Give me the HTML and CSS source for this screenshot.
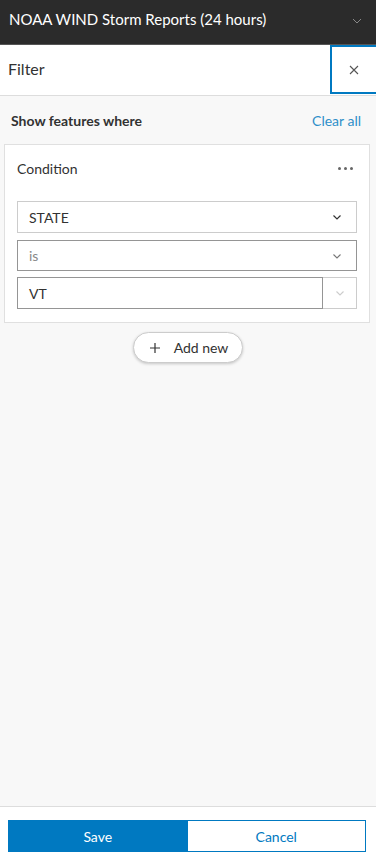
FILE: index.html
```html
<!DOCTYPE html>
<html lang="en">
<head>
    <meta charset="UTF-8">
    <meta name="viewport" content="width=device-width, initial-scale=1.0">
    <title>Filter</title>
    <link rel="stylesheet" href="styles.css">
</head>
<body>
    <div class="panel">
        <div class="layer-bar">
            <span class="layer-title">NOAA WIND Storm Reports (24 hours)</span>
            <svg class="chev light" width="12" height="12" viewBox="0 0 12 12"><path d="M2 4l4 4 4-4" fill="none" stroke="#888" stroke-width="1"/></svg>
        </div>
        <div class="filter-bar">
            <span class="filter-title">Filter</span>
            <button class="close-btn">
                <svg width="10" height="10" viewBox="0 0 10 10"><path d="M1 1l8 8M9 1l-8 8" stroke="#555" stroke-width="1.1"/></svg>
            </button>
        </div>
        <div class="content">
            <div class="where-row">
                <span class="where-label">Show features where</span>
                <a class="clear-all">Clear all</a>
            </div>
            <div class="card">
                <div class="card-head">
                    <span>Condition</span>
                    <span class="dots"><i></i><i></i><i></i></span>
                </div>
                <div class="select">
                    <span>STATE</span>
                    <svg width="12" height="12" viewBox="0 0 12 12"><path d="M2.5 4.5l3.5 3.5 3.5-3.5" fill="none" stroke="#333" stroke-width="1.2"/></svg>
                </div>
                <div class="select dark">
                    <span class="muted">is</span>
                    <svg width="12" height="12" viewBox="0 0 12 12"><path d="M2.5 4.5l3.5 3.5 3.5-3.5" fill="none" stroke="#777" stroke-width="1.1"/></svg>
                </div>
                <div class="combo">
                    <div class="combo-input">VT</div>
                    <div class="combo-btn">
                        <svg width="12" height="12" viewBox="0 0 12 12"><path d="M2.5 4.5l3.5 3.5 3.5-3.5" fill="none" stroke="#ccc" stroke-width="1.1"/></svg>
                    </div>
                </div>
            </div>
            <div class="add-wrap">
                <button class="add-btn">
                    <svg width="12" height="12" viewBox="0 0 12 12"><path d="M6 1v10M1 6h10" stroke="#333" stroke-width="1.2"/></svg>
                    <span>Add new</span>
                </button>
            </div>
        </div>
        <div class="footer">
            <button class="btn save">Save</button>
            <button class="btn cancel">Cancel</button>
        </div>
    </div>
</body>
</html>
```

FILE: styles.css
```css
body {
    margin: 0;
    font-family: Lato, "Open Sans", sans-serif;
    color: #323232;
}
.panel {
    display: flex;
    flex-direction: column;
    height: 859px;
    background: #f8f8f8;
}
.layer-bar {
    height: 45px;
    background: #2b2b2b;
    display: flex;
    align-items: center;
    justify-content: space-between;
    padding: 0 13px 0 9px;
    border-bottom: 1px solid #555;
    box-sizing: border-box;
}
.layer-title {
    color: #fff;
    font-size: 15px;
    position: relative;
    top: -3px;
}
.chev.light {
    position: relative;
    top: -1px;
}
.filter-bar {
    height: 51px;
    background: #fff;
    border-bottom: 1px solid #ddd;
    display: flex;
    justify-content: space-between;
    box-sizing: border-box;
}
.filter-title {
    font-size: 16px;
    padding-left: 8px;
    align-self: center;
    position: relative;
    top: -2px;
}
.close-btn {
    width: 46px;
    height: 49px;
    background: #fff;
    border: 2px solid #0079c1;
    border-right: none;
    display: flex;
    align-items: center;
    justify-content: center;
    padding: 0;
}
.content {
    flex: 1;
    padding: 0 6px 0 4px;
}
.where-row {
    display: flex;
    justify-content: space-between;
    align-items: center;
    height: 48px;
    padding: 0 9px 0 7px;
}
.where-label {
    font-size: 14px;
    font-weight: bold;
}
.clear-all {
    font-size: 14px;
    color: #2f8fc9;
}
.card {
    background: #fff;
    border: 1px solid #e0e0e0;
    padding: 0 12px 13px 12px;
}
.card-head {
    display: flex;
    justify-content: space-between;
    align-items: center;
    height: 46px;
    font-size: 14px;
    margin-bottom: 10px;
}
.dots {
    display: flex;
    gap: 3px;
    margin-right: 4px;
}
.dots i {
    width: 3px;
    height: 3px;
    background: #666;
    border-radius: 50%;
}
.select {
    height: 32px;
    border: 1px solid #ccc;
    display: flex;
    align-items: center;
    justify-content: space-between;
    padding: 0 13px 0 11px;
    font-size: 14px;
    margin-bottom: 7px;
    box-sizing: border-box;
}
.select.dark {
    border-color: #959595;
    height: 31px;
    margin-bottom: 6px;
}
.muted {
    color: #888;
}
.combo {
    display: flex;
    height: 32px;
}
.combo-input {
    flex: 1;
    border: 1px solid #959595;
    font-size: 14px;
    display: flex;
    align-items: center;
    padding-left: 11px;
}
.combo-btn {
    width: 33px;
    border: 1px solid #ccc;
    border-left: none;
    display: flex;
    align-items: center;
    justify-content: center;
}
.add-wrap {
    display: flex;
    justify-content: center;
    padding-top: 9px;
    padding-left: 2px;
}
.add-btn {
    display: flex;
    align-items: center;
    gap: 13px;
    height: 31px;
    padding: 0 14px 0 15px;
    background: #fff;
    border: 1px solid #ccc;
    border-radius: 16px;
    box-shadow: 0 1px 3px rgba(0, 0, 0, 0.2);
    font-family: Lato, sans-serif;
    font-size: 14px;
    color: #323232;
}
.footer {
    display: flex;
    background: #fff;
    border-top: 1px solid #ddd;
    padding: 13px 10px 7px 8px;
}
.btn {
    flex: 1;
    height: 32px;
    font-family: Lato, sans-serif;
    font-size: 14px;
    border: 1px solid #0079c1;
}
.save {
    background: #0079c1;
    color: #fff;
}
.cancel {
    background: #fff;
    color: #0079c1;
    margin-left: -1px;
}
```
